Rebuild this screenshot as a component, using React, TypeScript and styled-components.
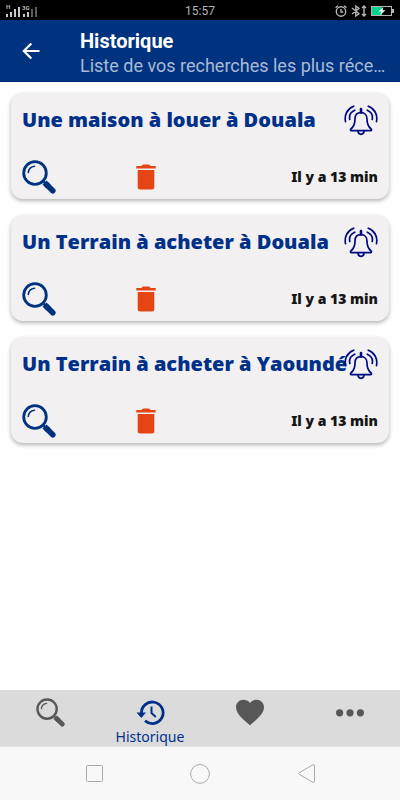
import React from "react";
import styled, { createGlobalStyle } from "styled-components";

const navy = "#00337f";
const ink = "#00308a";

const GlobalStyle = createGlobalStyle`
  *, *::before, *::after { box-sizing: border-box; }
  body { margin: 0; background: #fff; font-family: "Noto Sans", "Open Sans", sans-serif; }
  button { border: 0; padding: 0; background: none; font: inherit; color: inherit; cursor: pointer; }
  svg { display: block; }
`;

const Screen = styled.div`
  min-height: 100vh;
  display: flex;
  flex-direction: column;
`;

const StatusBar = styled.div`
  height: 20px;
  padding: 0 6px;
  display: grid;
  grid-template-columns: 1fr auto 1fr;
  align-items: center;
  background: #000;
  color: #b4b4b4;
  font: 12px/22px Roboto, sans-serif;
`;

const StatusIcons = styled.div`
  display: flex;
  justify-content: flex-end;
  align-items: center;
  gap: 4px;
`;

const AppBar = styled.header`
  height: 62px;
  padding: 0 12px 0 19px;
  display: flex;
  align-items: center;
  gap: 37px;
  background: ${navy};
  border-bottom: 1px solid #001f78;
  font-family: Roboto, sans-serif;
`;

const BackButton = styled.button`
  flex: none;
  color: #fff;
`;

const Heading = styled.div`
  min-width: 0;
  padding-top: 6px;
`;

const Title = styled.h1`
  margin: 0;
  font-size: 20px;
  line-height: 24px;
  font-weight: 700;
  color: #fff;
`;

const Subtitle = styled.p`
  margin: 0;
  font-size: 18px;
  line-height: 26px;
  color: #a9b9d6;
  white-space: nowrap;
  overflow: hidden;
  text-overflow: ellipsis;
`;

const List = styled.ul`
  flex: 1;
  margin: 0;
  padding: 11px;
  list-style: none;
  display: flex;
  flex-direction: column;
  gap: 16px;
`;

const Card = styled.li`
  height: 106px;
  padding: 11px 11px 5px;
  display: flex;
  flex-direction: column;
  justify-content: space-between;
  background: #f2f0f1;
  border-radius: 12px;
  box-shadow: 0 2px 4px rgba(0, 0, 0, 0.3);
`;

const CardTop = styled.div`
  display: flex;
  align-items: center;
  justify-content: space-between;
`;

const CardTitle = styled.h2`
  margin: 0;
  flex: 1;
  min-width: 0;
  font: 800 20px/32px "Open Sans", sans-serif;
  color: ${ink};
  white-space: nowrap;
`;

const CardBottom = styled.div`
  display: grid;
  grid-template-columns: 90px 68px 1fr;
  align-items: center;
`;

const CardAction = styled.button<{ $color: string; $centered?: boolean }>`
  display: flex;
  justify-content: ${(p) => (p.$centered ? "center" : "flex-start")};
  color: ${(p) => p.$color};
`;

const Time = styled.time`
  text-align: right;
  font: 900 14px/20px "Noto Sans", sans-serif;
  color: #151515;
`;

const TabBar = styled.nav`
  height: 56px;
  display: grid;
  grid-template-columns: repeat(4, 1fr);
  background: #dbdbdb;
`;

const Tab = styled.button<{ $active?: boolean }>`
  padding-top: 8px;
  display: flex;
  flex-direction: column;
  align-items: center;
  color: ${(p) => (p.$active ? ink : "#575757")};
  font-size: 14px;
  line-height: 18px;
`;

const SystemBar = styled.div`
  height: 54px;
  padding: 0 79px;
  display: flex;
  align-items: center;
  justify-content: space-between;
  background: #f8f8f8;
  border-top: 1px solid #e6e6e6;
  color: #aaa;
`;

function SearchIcon({ size }: { size: number }) {
  return (
    <svg width={size} height={size} viewBox="0 0 34 34" fill="none" stroke="currentColor">
      <circle cx="13" cy="13" r="11.3" strokeWidth="2.8" />
      <path d="M6.3 12.500a7 7 0 0 1 6.200-6.200" strokeWidth="1.6" strokeLinecap="round" />
      <path d="m20.800 20.800 4 4" strokeWidth="2" />
      <path d="m24.800 24.700 6 6" strokeWidth="5.600" strokeLinecap="round" />
      <path d="m22.500 22.500 4 4" strokeWidth="5.600" />
    </svg>
  );
}

function BellIcon() {
  return (
    <svg width="34" height="32" viewBox="0 0 34 32" fill="none" stroke="currentColor" strokeWidth="1.7" strokeLinecap="round" strokeLinejoin="round">
      <path d="M17 5v3.500" strokeWidth="2.600" />
      <path d="M17 8.700c-3.900 0-6 2.600-6 6.300 0 5-.7 7.300-3.900 9.700-1 .8-.7 2 .4 2h19c1.100 0 1.400-1.200.4-2-3.200-2.400-3.900-4.700-3.900-9.700 0-3.700-2.100-6.300-6-6.300Z" />
      <path d="M14 27c.2 4.400 5.800 4.400 6 0" />
      <path d="M9.700 2.200C3.300 4.600.2 10.800 1.500 17.600M10.700 6.200C6.600 8 4.900 11.300 5.800 15.500M24.300 2.200c6.400 2.400 9.500 8.600 8.200 15.400M23.300 6.200c4.100 1.800 5.800 5.100 4.900 9.300" />
    </svg>
  );
}

function TrashIcon() {
  return (
    <svg width="20" height="26" viewBox="0 0 20 26" fill="currentColor">
      <path d="M.3 2h5L7 .4h6L14.700 2h5v2.500H.3zM1.700 6h16.600v17q0 2.500-2.500 2.500H4.200q-2.500 0-2.500-2.500z" />
    </svg>
  );
}

function SignalIcon() {
  return (
    <svg width="34" height="14" viewBox="0 0 34 14">
      <path d="M0 10h2v3H0zM4 8h2v5H4zM8 5h2v8H8zM12 3h2v10h-2zM17 10h2v3h-2zM21 8h2v5h-2z" fill="#c8c8c8" />
      <path d="M25 5h2v8h-2zM29 3h2v10h-2z" fill="#5c5c5c" />
      <text x="0" y="5" fontFamily="Roboto, sans-serif" fontSize="6" fontWeight="700" fill="#bbb">H</text>
      <text x="16" y="6" fontFamily="Roboto, sans-serif" fontSize="6" fontWeight="700" fill="#bbb">3G</text>
    </svg>
  );
}

function AlarmIcon() {
  return (
    <svg width="12" height="12" viewBox="0 0 12 12" fill="none" stroke="currentColor" strokeWidth="1.4">
      <circle cx="6" cy="6.500" r="4.700" />
      <path d="M6 4v3h2.300M.6 2.800 3 .8M11.400 2.800 9 .8" />
    </svg>
  );
}

function BluetoothIcon() {
  return (
    <svg width="16" height="12" viewBox="0 0 16 12" fill="none" stroke="currentColor" strokeWidth="1.400">
      <path d="m1 3 7 5.700L4.800 11V1L8 3.300 1 9M13 1v10M11 3l2-2 2 2M11 9l2 2 2-2" />
    </svg>
  );
}

function BatteryIcon() {
  return (
    <svg width="23" height="10" viewBox="0 0 23 10">
      <rect x=".5" y=".5" width="20" height="9" fill="none" stroke="#b4b4b4" />
      <path d="M1 1h10v8H1z" fill="#08d38c" />
      <path d="M21 3h2v4h-2z" fill="#b4b4b4" />
      <path d="M12.500 1 7.500 5.500h3L9 9l5.500-4.700h-3z" fill="#fff" />
    </svg>
  );
}

const searches = [
  "Une maison à louer à Douala",
  "Un Terrain à acheter à Douala",
  "Un Terrain à acheter à Yaoundé",
];

export default function App() {
  return (
    <>
      <GlobalStyle />
      <Screen>
        <StatusBar>
          <SignalIcon />
          <span>15:57</span>
          <StatusIcons>
            <AlarmIcon />
            <BluetoothIcon />
            <BatteryIcon />
          </StatusIcons>
        </StatusBar>
        <AppBar>
          <BackButton aria-label="Retour">
            <svg width="24" height="24" viewBox="0 0 24 24" fill="currentColor">
              <path d="M20.500 11H7.300l5.800-5.800-1.600-1.500L3.300 12l8.200 8.300 1.600-1.500L7.300 13h13.200z" />
            </svg>
          </BackButton>
          <Heading>
            <Title>Historique</Title>
            <Subtitle>Liste de vos recherches les plus réce…</Subtitle>
          </Heading>
        </AppBar>
        <List>
          {searches.map((name) => (
            <Card key={name}>
              <CardTop>
                <CardTitle>{name}</CardTitle>
                <CardAction $color="#000a82" aria-label="Alerte">
                  <BellIcon />
                </CardAction>
              </CardTop>
              <CardBottom>
                <CardAction $color={navy} aria-label="Rechercher">
                  <SearchIcon size={34} />
                </CardAction>
                <CardAction $color="#e54514" $centered aria-label="Supprimer">
                  <TrashIcon />
                </CardAction>
                <Time>Il y a 13 min</Time>
              </CardBottom>
            </Card>
          ))}
        </List>
        <TabBar>
          <Tab aria-label="Rechercher">
            <SearchIcon size={29} />
          </Tab>
          <Tab $active>
            <svg width="30" height="30" viewBox="0 0 30 30" fill="none" stroke="currentColor">
              <path d="M6.500 15.500A10.800 10.800 0 1 1 10 22.800" strokeWidth="2.800" />
              <path d="M1.500 14.500h9.500L6.300 20z" fill="currentColor" stroke="none" />
              <path d="M16.500 8.500v6.500l4.300 4" strokeWidth="2" />
            </svg>
            Historique
          </Tab>
          <Tab aria-label="Favoris">
            <svg width="28" height="30" viewBox="0 0 28 30" fill="currentColor">
              <path d="M14 27.200C9 22.700 0 16.500 0 9.300 0 5 3.200 1.800 7.400 1.800c2.600 0 5 1.200 6.600 3.200 1.600-2 4-3.200 6.600-3.200C24.800 1.800 28 5 28 9.300c0 7.200-9 13.400-14 17.900z" />
            </svg>
          </Tab>
          <Tab aria-label="Plus">
            <svg width="28" height="30" viewBox="0 0 28 30" fill="currentColor">
              <circle cx="3.600" cy="14.800" r="3.600" />
              <circle cx="14" cy="14.800" r="3.600" />
              <circle cx="24.400" cy="14.800" r="3.600" />
            </svg>
          </Tab>
        </TabBar>
        <SystemBar>
          <button aria-label="Applications récentes">
            <svg width="30" height="20" viewBox="0 0 30 20" fill="none" stroke="currentColor">
              <rect x="7.500" y="1.500" width="16" height="16" rx="1" />
            </svg>
          </button>
          <button aria-label="Accueil">
            <svg width="20" height="20" viewBox="0 0 20 20" fill="none" stroke="currentColor">
              <circle cx="10" cy="9.900" r="9.400" />
            </svg>
          </button>
          <button aria-label="Précédent">
            <svg width="30" height="20" viewBox="0 0 30 20" fill="none" stroke="currentColor">
              <path d="M8.200 8.700 21.500 1q2-.8 2 1v15.200q0 1.800-2 1L8.200 10.300q-1.200-.8 0-1.600z" />
            </svg>
          </button>
        </SystemBar>
      </Screen>
    </>
  );
}
